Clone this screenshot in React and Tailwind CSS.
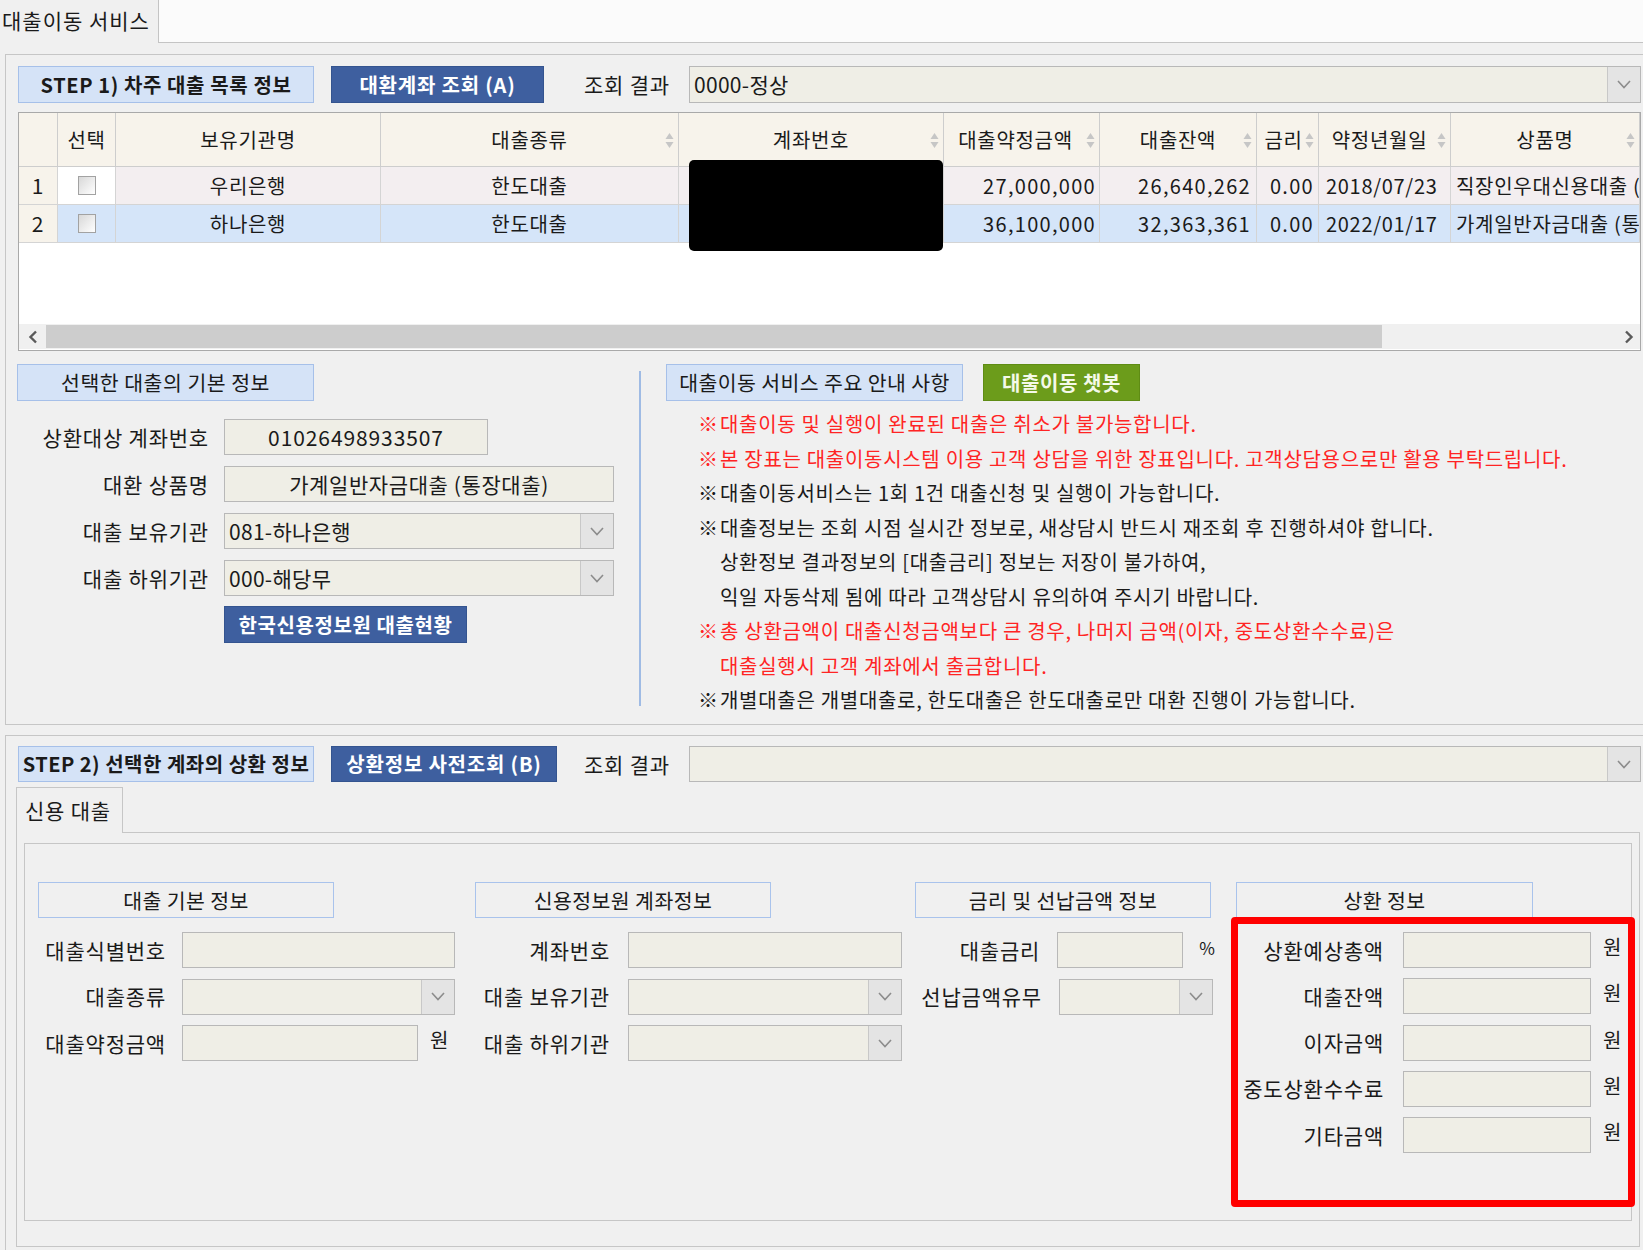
import React from "react";

function Chevron() {
  return (
    <svg width="14" height="9" viewBox="0 0 14 9">
      <polyline points="1,1 7,7.5 13,1" fill="none" stroke="#8c8c8c" strokeWidth="1.6" />
    </svg>
  );
}

function Sort() {
  return (
    <svg width="9" height="17" viewBox="0 0 9 17" className="absolute right-[4px] top-[19px]">
      <path d="M4.5 1 L8.5 7 L0.5 7 Z" fill="#c6c6c6" />
      <path d="M4.5 16 L8.5 10 L0.5 10 Z" fill="#c6c6c6" />
    </svg>
  );
}

function Combo({ className, text }) {
  return (
    <div className={"flex border border-[#b8b8b8] bg-[#efeee6] " + className}>
      <div className="flex-1 flex items-center pl-[4px] text-[21px] tracking-[0.3px] leading-none overflow-hidden whitespace-nowrap">
        {text}
      </div>
      <div className="w-[33px] flex items-center justify-center border-l border-[#c8c8c8] bg-[#e4e4e4]">
        <Chevron />
      </div>
    </div>
  );
}

function Field({ className, children }) {
  return (
    <div className={"border border-[#b8b8b8] bg-[#efeee6] flex items-center text-[21px] leading-none " + className}>
      {children}
    </div>
  );
}

function CheckBox() {
  return <div className="w-[18px] h-[19px] border border-[#a2a2a2] bg-linear-to-br from-[#d8d8d8] to-[#ffffff]" />;
}

const headCell = "relative h-[54px] border-r border-b border-[#cdcdcd] bg-[#f7f3eb] flex items-center justify-center text-[20px] tracking-[0.7px] leading-none";
const cell = "h-[38px] border-r border-b border-[#d4d4d4] flex items-center text-[20px] tracking-[0.7px] leading-none whitespace-nowrap overflow-hidden";

function LoanTable() {
  const rows = [
    { n: "1", bank: "우리은행", kind: "한도대출", amt: "27,000,000", bal: "26,640,262", rate: "0.00", date: "2018/07/23", prod: "직장인우대신용대출 (", bg: "bg-[#f3eef0]", chk: "bg-white" },
    { n: "2", bank: "하나은행", kind: "한도대출", amt: "36,100,000", bal: "32,363,361", rate: "0.00", date: "2022/01/17", prod: "가계일반자금대출 (통", bg: "bg-[#d5e5f9]", chk: "bg-[#d5e5f9]" },
  ];
  return (
    <div className="relative mt-[9px] w-[1623px] h-[239px] border border-[#a9a9a9] bg-white flex flex-col">
      <div className="grid grid-cols-[39px_58px_265px_298px_265px_156px_157px_62px_132px_189px]">
        <div className={headCell}></div>
        <div className={headCell}>선택</div>
        <div className={headCell}>보유기관명</div>
        <div className={headCell}>대출종류<Sort /></div>
        <div className={headCell}>계좌번호<Sort /></div>
        <div className={headCell + " pr-[12px]"}>대출약정금액<Sort /></div>
        <div className={headCell}>대출잔액<Sort /></div>
        <div className={headCell + " pr-[8px]"}>금리<Sort /></div>
        <div className={headCell + " pr-[10px]"}>약정년월일<Sort /></div>
        <div className={headCell}>상품명<Sort /></div>
        {rows.map((r) => (
          <React.Fragment key={r.n}>
            <div className={cell + " justify-center bg-[#f7f3eb] text-[21px]"}>{r.n}</div>
            <div className={cell + " justify-center " + r.chk}><CheckBox /></div>
            <div className={cell + " justify-center " + r.bg}>{r.bank}</div>
            <div className={cell + " justify-center " + r.bg}>{r.kind}</div>
            <div className={cell + " " + r.bg}></div>
            <div className={cell + " justify-end pr-[3px] tracking-[1.3px] " + r.bg}>{r.amt}</div>
            <div className={cell + " justify-end pr-[5px] tracking-[1.3px] " + r.bg}>{r.bal}</div>
            <div className={cell + " justify-end pr-[4px] tracking-[1.3px] " + r.bg}>{r.rate}</div>
            <div className={cell + " pl-[7px] tracking-[0.5px] " + r.bg}>{r.date}</div>
            <div className={cell + " pl-[5px] " + r.bg}>{r.prod}</div>
          </React.Fragment>
        ))}
      </div>
      <div className="h-[81px]" />
      <div className="h-[25px] flex bg-[#f0f0f0]">
        <div className="w-[27px] flex items-center justify-center">
          <svg width="10" height="14" viewBox="0 0 10 14"><polyline points="8,1.5 2.5,7 8,12.5" fill="none" stroke="#5a5a5a" strokeWidth="2.4" /></svg>
        </div>
        <div className="w-[1336px] my-[1px] bg-[#cdcdcd]" />
        <div className="flex-1 flex items-center justify-end pr-[6px]">
          <svg width="10" height="14" viewBox="0 0 10 14"><polyline points="2,1.5 7.5,7 2,12.5" fill="none" stroke="#5a5a5a" strokeWidth="2.4" /></svg>
        </div>
      </div>
      <div className="absolute left-[670px] top-[47px] w-[254px] h-[91px] bg-black rounded-[5px]" />
    </div>
  );
}

function Note({ red, mark = true, children }) {
  return (
    <div className={"flex h-[34.5px] items-center whitespace-nowrap " + (red ? "text-[#ff2424]" : "text-[#1a1a1a]")}>
      <span className="w-[22px] tracking-normal">{mark ? "※" : ""}</span>
      <span>{children}</span>
    </div>
  );
}

function GroupHeader({ children, className = "" }) {
  return (
    <div className={"h-[36px] w-[296px] border border-[#a9c3ec] flex items-center justify-center text-[20.5px] tracking-[0.4px] leading-none " + className}>
      {children}
    </div>
  );
}

function Label({ className, children }) {
  return <div className={"text-right text-[21px] tracking-[0.8px] leading-none whitespace-nowrap " + className}>{children}</div>;
}

export default function App() {
  return (
    <div className="w-[1643px] h-[1250px] overflow-hidden bg-[#f0f0f0] text-[#1a1a1a] font-['Noto_Sans_CJK_KR','Noto_Sans',sans-serif]">
      {/* top tab strip */}
      <div className="flex h-[43px]">
        <div className="w-[159px] bg-[#f0f0f0] border-r border-[#c4c4c4] flex items-center pl-[2px] pb-[2px] text-[21px] tracking-[1px] leading-none">
          대출이동 서비스
        </div>
        <div className="flex-1 bg-[#fbfbfb] border-b border-[#c4c4c4]" />
      </div>

      {/* panel 1 */}
      <div className="ml-[5px] mt-[11px] w-[1650px] h-[671px] border border-[#c6c6c6] pt-[11px] pl-[12px]">
        <div className="flex h-[37px]">
          <div className="w-[296px] bg-[#d5e3f7] border border-[#a6c0e9] flex items-center justify-center text-[20px] tracking-[0.6px] font-bold leading-none">
            STEP 1) 차주 대출 목록 정보
          </div>
          <div className="ml-[17px] w-[213px] bg-[#3e5f9f] border border-[#34548f] flex items-center justify-center text-[20px] tracking-[0.8px] font-bold leading-none text-white">
            대환계좌 조회 (A)
          </div>
          <div className="w-[145px] pl-[40px] flex items-center text-[21px] tracking-[0.8px] leading-none">조회 결과</div>
          <Combo className="w-[952px]" text="0000-정상" />
        </div>

        <LoanTable />

        <div className="mt-[13px] flex">
          {/* left column */}
          <div className="w-[621px]">
            <div className="w-[297px] -ml-px h-[37px] bg-[#d5e3f7] border border-[#a6c0e9] flex items-center justify-center text-[20.5px] tracking-[0.5px] leading-none">
              선택한 대출의 기본 정보
            </div>
            <div className="mt-[18px] flex flex-col gap-[11px]">
              <div className="flex h-[36px] items-center">
                <Label className="w-[191px]">상환대상 계좌번호</Label>
                <Field className="ml-[15px] w-[264px] h-[36px] justify-center tracking-[0.9px]">01026498933507</Field>
              </div>
              <div className="flex h-[36px] items-center">
                <Label className="w-[191px]">대환 상품명</Label>
                <Field className="ml-[15px] w-[390px] h-[36px] justify-center tracking-[0.6px]">가계일반자금대출 (통장대출)</Field>
              </div>
              <div className="flex h-[36px] items-center">
                <Label className="w-[191px]">대출 보유기관</Label>
                <Combo className="ml-[15px] w-[390px] h-[36px]" text="081-하나은행" />
              </div>
              <div className="flex h-[36px] items-center">
                <Label className="w-[191px]">대출 하위기관</Label>
                <Combo className="ml-[15px] w-[390px] h-[36px]" text="000-해당무" />
              </div>
            </div>
            <div className="mt-[10px] ml-[206px] w-[243px] h-[37px] bg-[#3e5f9f] border border-[#34548f] flex items-center justify-center text-[20px] tracking-[0.6px] font-bold leading-none text-white">
              한국신용정보원 대출현황
            </div>
          </div>

          {/* divider */}
          <div className="w-[2px] mt-[7px] h-[335px] bg-[#9fbbe4]" />

          {/* right column */}
          <div className="ml-[25px] flex-1">
            <div className="flex h-[37px]">
              <div className="w-[297px] bg-[#d5e3f7] border border-[#a6c0e9] flex items-center justify-center text-[20.5px] tracking-[0.4px] leading-none">
                대출이동 서비스 주요 안내 사항
              </div>
              <div className="ml-[20px] w-[157px] bg-[#6c9c1b] border border-[#5f8c14] flex items-center justify-center text-[20px] tracking-[0.6px] font-bold leading-none text-[#f4f9e8]">
                대출이동 챗봇
              </div>
            </div>
            <div className="mt-[6px] pl-[32px] text-[20px] tracking-[0.7px] leading-none">
              <Note red>대출이동 및 실행이 완료된 대출은 취소가 불가능합니다.</Note>
              <Note red>본 장표는 대출이동시스템 이용 고객 상담을 위한 장표입니다. 고객상담용으로만 활용 부탁드립니다.</Note>
              <Note>대출이동서비스는 1회 1건 대출신청 및 실행이 가능합니다.</Note>
              <Note>대출정보는 조회 시점 실시간 정보로, 새상담시 반드시 재조회 후 진행하셔야 합니다.</Note>
              <Note mark={false}>상환정보 결과정보의 [대출금리] 정보는 저장이 불가하여,</Note>
              <Note mark={false}>익일 자동삭제 됨에 따라 고객상담시 유의하여 주시기 바랍니다.</Note>
              <Note red>총 상환금액이 대출신청금액보다 큰 경우, 나머지 금액(이자, 중도상환수수료)은</Note>
              <Note red mark={false}>대출실행시 고객 계좌에서 출금합니다.</Note>
              <Note>개별대출은 개별대출로, 한도대출은 한도대출로만 대환 진행이 가능합니다.</Note>
            </div>
          </div>
        </div>
      </div>

      {/* panel 2 */}
      <div className="ml-[5px] mt-[10px] w-[1650px] h-[530px] border border-[#c6c6c6] pt-[10px] pl-[12px]">
        <div className="flex h-[36px]">
          <div className="w-[296px] bg-[#d5e3f7] border border-[#a6c0e9] flex items-center justify-center text-[20px] tracking-[0.5px] font-bold leading-none">
            STEP 2) 선택한 계좌의 상환 정보
          </div>
          <div className="ml-[17px] w-[226px] bg-[#3e5f9f] border border-[#34548f] flex items-center justify-center text-[20px] tracking-[0.8px] font-bold leading-none text-white">
            상환정보 사전조회 (B)
          </div>
          <div className="w-[132px] pl-[27px] flex items-center text-[21px] tracking-[0.8px] leading-none">조회 결과</div>
          <Combo className="w-[952px]" text="" />
        </div>

        {/* tab */}
        <div className="mt-[5px] -ml-[2px] relative z-10 w-[107px] h-[46px] -mb-px border-t border-l border-r border-[#c6c6c6] bg-[#f0f0f0] flex items-center pl-[8px] text-[21px] tracking-[0.8px] leading-none">
          신용 대출
        </div>
        <div className="-ml-[2px] w-[1624px] h-[415px] border border-[#c6c6c6] pt-[10px] pl-[7px]">
          <div className="relative w-[1608px] h-[378px] border border-[#c6c6c6] pt-[38px] flex">
            {/* col1 */}
            <div className="ml-[13px] w-[422px]">
              <GroupHeader>대출 기본 정보</GroupHeader>
              <div className="mt-[14px] flex flex-col gap-[10.5px]">
                <div className="flex h-[36px] items-center">
                  <Label className="w-[128px]">대출식별번호</Label>
                  <Field className="ml-[16px] w-[273px] h-[36px]" />
                </div>
                <div className="flex h-[36px] items-center">
                  <Label className="w-[128px]">대출종류</Label>
                  <Combo className="ml-[16px] w-[273px] h-[36px]" text="" />
                </div>
                <div className="flex h-[36px] items-center">
                  <Label className="w-[128px]">대출약정금액</Label>
                  <Field className="ml-[16px] w-[236px] h-[36px]" />
                  <span className="ml-[12px] text-[20px] leading-none -mt-[6px]">원</span>
                </div>
              </div>
            </div>
            {/* col2 */}
            <div className="ml-[15px] w-[430px]">
              <GroupHeader>신용정보원 계좌정보</GroupHeader>
              <div className="mt-[14px] flex flex-col gap-[10.5px]">
                <div className="flex h-[36px] items-center">
                  <Label className="w-[135px]">계좌번호</Label>
                  <Field className="ml-[18px] w-[274px] h-[36px]" />
                </div>
                <div className="flex h-[36px] items-center">
                  <Label className="w-[135px]">대출 보유기관</Label>
                  <Combo className="ml-[18px] w-[274px] h-[36px]" text="" />
                </div>
                <div className="flex h-[36px] items-center">
                  <Label className="w-[135px]">대출 하위기관</Label>
                  <Combo className="ml-[18px] w-[274px] h-[36px]" text="" />
                </div>
              </div>
            </div>
            {/* col3 */}
            <div className="ml-[10px] w-[300px]">
              <GroupHeader>금리 및 선납금액 정보</GroupHeader>
              <div className="mt-[14px] flex flex-col gap-[10.5px]">
                <div className="flex h-[36px] items-center">
                  <Label className="w-[127px]">대출금리</Label>
                  <Field className="ml-[17px] w-[128px] h-[36px]" />
                  <span className="ml-[16px] text-[17px] leading-none -mt-[6px]">%</span>
                </div>
                <div className="flex h-[36px] items-center">
                  <Label className="w-[127px]">선납금액유무</Label>
                  <Combo className="ml-[17px] w-[154px] h-[36px]" text="" />
                </div>
              </div>
            </div>
            {/* col4 */}
            <div className="ml-[21px] w-[390px]">
              <GroupHeader className="w-[297px]">상환 정보</GroupHeader>
              <div className="mt-[14px] flex flex-col gap-[10.3px]">
                {["상환예상총액", "대출잔액", "이자금액", "중도상환수수료", "기타금액"].map((l) => (
                  <div key={l} className="flex h-[36px] items-center">
                    <Label className="w-[148px]">{l}</Label>
                    <Field className="ml-[19px] w-[188px] h-[36px]" />
                    <span className="ml-[12px] text-[20px] leading-none -mt-[6px]">원</span>
                  </div>
                ))}
              </div>
            </div>

            {/* red annotation */}
            <div className="absolute left-[1206px] top-[73px] w-[404px] h-[290px] border-[7px] border-[#ff0000] rounded-[4px]" />
          </div>
        </div>
      </div>
    </div>
  );
}
